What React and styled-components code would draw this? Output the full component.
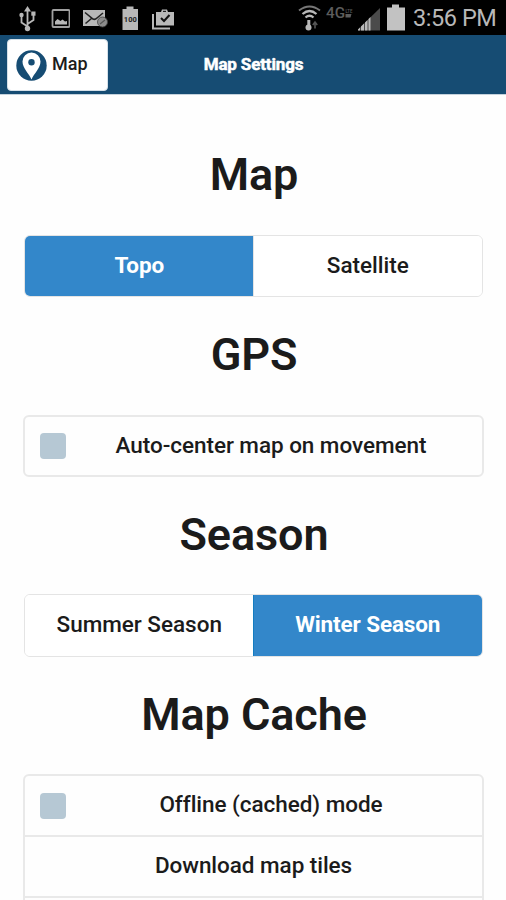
import React, { useState } from 'react';
import styled, { createGlobalStyle } from 'styled-components';

const GlobalStyle = createGlobalStyle`
  * {
    box-sizing: border-box;
  }

  body {
    margin: 0;
    background: #fefefe;
    font-family: Roboto, "Liberation Sans", sans-serif;
    font-variant-ligatures: none;
    color: #1b1b1b;
  }
`;

const Screen = styled.div`
  height: 900px;
  overflow: hidden;
`;

const StatusBar = styled.div`
  display: flex;
  justify-content: space-between;
  height: 35px;
  padding: 0 9px 0 19px;
  background: #000;
  color: #b8b8b8;
`;

const StatusIcons = styled.div`
  display: flex;
  gap: ${(props) => props.$gap}px;

  svg {
    display: block;
    flex: none;
  }
`;

const Clock = styled.span`
  width: 84px;
  margin-left: 3px;
  font-size: 23.5px;
  letter-spacing: -0.45px;
  line-height: 37px;
  white-space: nowrap;
`;

const Header = styled.header`
  display: grid;
  grid-template-columns: 1fr auto 1fr;
  align-items: center;
  height: 60px;
  padding: 1px 6px 0 7px;
  background: #164c73;
  border-bottom: 1px solid #c5d2dc;
`;

const MapButton = styled.button`
  display: flex;
  align-items: center;
  width: 101px;
  height: 52px;
  padding: 0 0 0 8px;
  border: 1px solid #d5e0e8;
  border-radius: 4px;
  background: #fff;
  color: #1b1b1b;
  font: 500 18px Roboto, sans-serif;

  svg {
    flex: none;
    margin-right: 5px;
  }

  span {
    margin-top: -3px;
  }
`;

const Title = styled.h1`
  margin: -3px 0 0;
  color: #fff;
  font-size: 17px;
  font-weight: 700;
  letter-spacing: -0.15px;
  -webkit-text-stroke: 0.5px #fff;
`;

const Content = styled.main`
  padding: 22px 22px 0 23px;
`;

const Heading = styled.h2`
  margin: 0;
  height: ${(props) => props.$height}px;
  padding: 31px 0 0 1px;
  font-size: 45px;
  font-weight: 600;
  letter-spacing: -0.1px;
  line-height: 54px;
  text-align: center;
`;

const Segmented = styled.div`
  display: flex;
  height: ${(props) => props.$height}px;
  margin: 0 1px;
  border: 1px solid #e4e4e4;
  border-radius: 6px;
  overflow: hidden;
`;

const Segment = styled.button`
  flex: 1;
  margin: -1px;
  padding: 0 0 3px;
  border: 1px solid ${(props) => (props.$active ? '#147dc1' : '#e4e4e4')};
  background: ${(props) => (props.$active ? '#3387ca' : '#fff')};
  color: ${(props) => (props.$active ? '#fff' : '#1b1b1b')};
  font: ${(props) => (props.$active ? 700 : 500)} 22.5px Roboto, sans-serif;
  letter-spacing: ${(props) => (props.$active ? '-0.12px' : '-0.02px')};
`;

const List = styled.div`
  border: 2px solid #e9e9e9;
  border-radius: 6px;
`;

const Row = styled.label`
  display: flex;
  align-items: center;
  height: ${(props) => props.$height}px;
  padding: 0 14px;
  font-size: 22.5px;
  font-weight: 500;
  letter-spacing: -0.05px;

  & + & {
    border-top: 2px solid #e9e9e9;
  }
`;

const Check = styled.input`
  appearance: none;
  width: 26px;
  height: 26px;
  margin: 0 8px 0 1px;
  border-radius: 4px;
  background: #b6c8d4;

  &:checked {
    background: #3387ca;
  }
`;

const RowText = styled.span`
  flex: 1;
  padding-bottom: 3px;
  text-align: center;
  white-space: nowrap;
`;

function UsbIcon() {
  return (
    <svg width="18" height="35" viewBox="0 0 18 35" fill="none" stroke="currentColor" strokeWidth="1.8">
      <path d="M8.500 11v17M8.500 26.500l-6-4v-8M8.500 24l6-4v-7" />
      <path d="M8.500 6l3.500 5.500H5z" fill="currentColor" stroke="none" />
      <circle cx="8.500" cy="28.500" r="2.700" fill="currentColor" stroke="none" />
      <circle cx="2.500" cy="15" r="2.200" fill="currentColor" stroke="none" />
      <path d="M12.300 11.500h4.200v4.200h-4.200z" fill="currentColor" stroke="none" />
    </svg>
  );
}

function PictureIcon() {
  return (
    <svg width="20" height="35" viewBox="0 0 20 35">
      <rect x="2.500" y="10" width="17" height="17" rx="1" fill="none" stroke="#a0a0a0" strokeWidth="1.800" />
      <path d="M5 24.500v-3l2.500-2.500 3 2 2-1.500 2.500 2 2-.500v3.500z" fill="currentColor" />
    </svg>
  );
}

function MailIcon() {
  return (
    <svg width="26" height="35" viewBox="0 0 26 35">
      <rect x="0" y="10" width="22" height="16" fill="currentColor" />
      <path d="M2 12.500l8 6.500q2 1 4-1l6-5M2.500 23.500l6-5" fill="none" stroke="#222" strokeWidth="1.600" />
      <circle cx="19.500" cy="22" r="5" fill="#8c8c8c" stroke="#444" strokeWidth=".8" />
      <path d="M17 24l5-4" fill="none" stroke="#555" strokeWidth="1.300" />
    </svg>
  );
}

function FullBatteryIcon() {
  return (
    <svg width="17" height="35" viewBox="0 0 17 35">
      <path d="M.5 9h4V6.500h7V9h4.500v21H.5z" fill="currentColor" />
      <text x="8.300" y="22" textAnchor="middle" fontSize="7.500" fontWeight="700" fontFamily="Roboto" fill="#222">
        100
      </text>
    </svg>
  );
}

function TaskIcon() {
  return (
    <svg width="23" height="35" viewBox="0 0 23 35">
      <path d="M1 14v14.500h17" fill="none" stroke="currentColor" strokeWidth="2" />
      <path d="M4 12h5l1-2.500h5l1 2.500h6v13.500H4z" fill="currentColor" />
      <path d="M11 10.800h3V12h-3z" fill="#222" />
      <path d="M9 18l3 3 5.500-6" fill="none" stroke="#111" strokeWidth="2" />
    </svg>
  );
}

function WifiIcon() {
  return (
    <svg width="24" height="35" viewBox="0 0 24 35" fill="none" stroke="currentColor">
      <path d="M2 10.500q10.500-8 21 0" stroke="#777" strokeWidth="2" />
      <path d="M5.500 14q7-6 14 0M8.500 17.500q4-3.500 8 0" strokeWidth="2.300" />
      <path d="M10.300 20h3v7h-3z" fill="currentColor" stroke="none" />
      <circle cx="11.500" cy="27.500" r="3" fill="currentColor" stroke="none" />
      <path d="M18 28.500v-6M15.800 25l2.200-3 2.200 3" stroke="#555" strokeWidth="1.600" />
    </svg>
  );
}

function NetworkIcon() {
  return (
    <svg width="27" height="35" viewBox="0 0 27 35" fill="#5c5c5c" fontFamily="Roboto" fontWeight="500">
      <text x="0" y="17.500" fontSize="14" textLength="19" lengthAdjust="spacingAndGlyphs">4G</text>
      <text x="19.500" y="12.500" fontSize="6" textLength="7" lengthAdjust="spacingAndGlyphs">LTE</text>
      <path d="M19.500 14h6l-1 3.500h-5z" />
    </svg>
  );
}

function SignalIcon() {
  return (
    <svg width="24" height="35" viewBox="0 0 24 35">
      <path d="M-1 30.500L22 8v22.500z" fill="#4b4b4b" />
      <path d="M-1 30.500l3-3v3zM3 30.500v-4l3-3v7zM7 30.500v-8l2.500-2.500v10.500zM10.500 30.500V19l2-2v13.500z" fill="currentColor" />
    </svg>
  );
}

function BatteryIcon() {
  return (
    <svg width="18" height="35" viewBox="0 0 18 35">
      <path d="M0 7.500h5V4.500h7v3h6V30.500H0z" fill="#c2c2c2" />
    </svg>
  );
}

function PinIcon() {
  return (
    <svg width="31" height="31" viewBox="0 0 31 31">
      <circle cx="15.500" cy="15.500" r="15.200" fill="#164c73" />
      <path d="M15.500 29.500C13 23.500 6.500 18 6.500 11.500a9 9 0 0 1 18 0c0 6.500-6.500 12-9 18z" fill="#fff" />
      <circle cx="15.500" cy="12.300" r="3.200" fill="#164c73" />
    </svg>
  );
}

function Toggle({ options, initial, height }) {
  const [value, setValue] = useState(initial);

  return (
    <Segmented $height={height}>
      {options.map((option) => (
        <Segment key={option} $active={option === value} onClick={() => setValue(option)}>
          {option}
        </Segment>
      ))}
    </Segmented>
  );
}

export default function App() {
  return (
    <Screen>
      <GlobalStyle />
      <StatusBar>
        <StatusIcons $gap={13}>
          <UsbIcon />
          <PictureIcon />
          <MailIcon />
          <FullBatteryIcon />
          <TaskIcon />
        </StatusIcons>
        <StatusIcons $gap={5}>
          <WifiIcon />
          <NetworkIcon />
          <SignalIcon />
          <BatteryIcon />
          <Clock>3:56 PM</Clock>
        </StatusIcons>
      </StatusBar>
      <Header>
        <MapButton>
          <PinIcon />
          <span>Map</span>
        </MapButton>
        <Title>Map Settings</Title>
      </Header>
      <Content>
        <Heading $height={118}>Map</Heading>
        <Toggle options={['Topo', 'Satellite']} initial="Topo" height={62} />
        <Heading $height={118}>GPS</Heading>
        <List>
          <Row $height={58}>
            <Check type="checkbox" />
            <RowText>Auto-center map on movement</RowText>
          </Row>
        </List>
        <Heading $height={117}>Season</Heading>
        <Toggle options={['Summer Season', 'Winter Season']} initial="Winter Season" height={63} />
        <Heading $height={117}>Map Cache</Heading>
        <List>
          <Row $height={59}>
            <Check type="checkbox" />
            <RowText>Offline (cached) mode</RowText>
          </Row>
          <Row $height={61}>
            <RowText>Download map tiles</RowText>
          </Row>
          <Row $height={61} />
        </List>
      </Content>
    </Screen>
  );
}
